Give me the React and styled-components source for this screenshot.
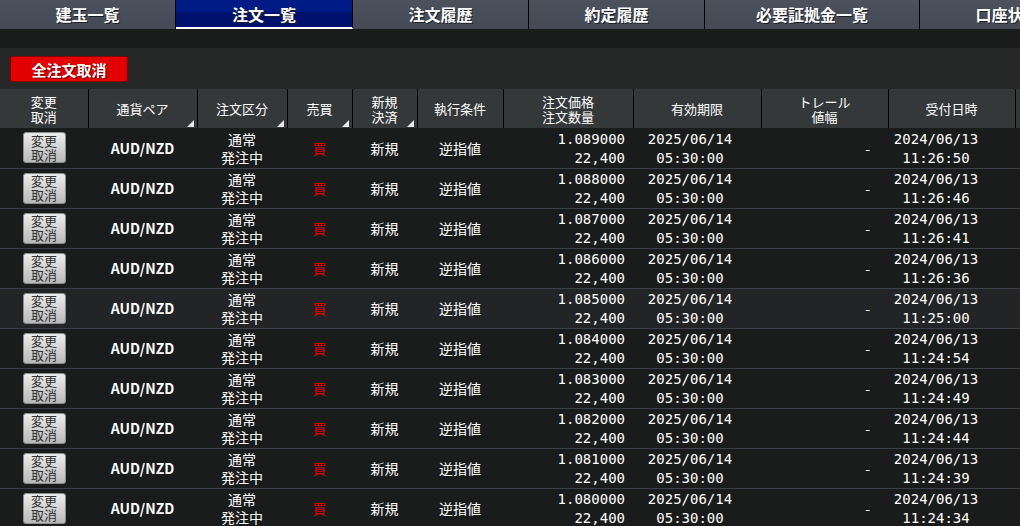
import React from "react";
import styled, { createGlobalStyle } from "styled-components";

const GlobalStyle = createGlobalStyle`
  html, body {
    margin: 0;
    padding: 0;
    background: #1a1b1b;
    overflow: hidden;
  }
  body {
    font-family: "Noto Sans CJK JP", "Noto Sans", sans-serif;
    color: #fff;
  }
`;

const Page = styled.div`
  width: 1020px;
  height: 526px;
  overflow: hidden;
  background: #1a1b1b;
`;

const TabBar = styled.div`
  display: flex;
  height: 29px;
  background: #444a55;
`;

const Tab = styled.div`
  flex: 0 0 ${(p) => p.w}px;
  box-sizing: border-box;
  display: flex;
  align-items: center;
  justify-content: center;
  border-right: 1px solid #000;
  font-size: 16px;
  font-weight: bold;
  color: #fff;
  text-shadow: 1px 1px 0 #1c1f26;
  background: ${(p) =>
    p.active
      ? "linear-gradient(#001b86 0, #001b86 46%, #00126e 46%, #00126e 100%)"
      : "linear-gradient(#4c515e, #434955)"};
  border-bottom: ${(p) => (p.active ? "2px solid #fff" : "none")};
  padding-bottom: ${(p) => (p.active ? "0" : "2px")};
`;

const Spacer = styled.div`
  height: 19px;
  background: #1a1b1b;
`;

const Toolbar = styled.div`
  height: 41px;
  background: #262828;
  display: flex;
  align-items: center;
  padding-left: 10px;
`;

const CancelAllButton = styled.button`
  width: 118px;
  height: 26px;
  margin-top: 1px;
  border: 1px solid #8a0000;
  border-radius: 2px;
  background: #e30000;
  color: #fff;
  font-family: "Noto Sans CJK JP", sans-serif;
  font-size: 15px;
  font-weight: bold;
  text-shadow: 1px 1px 0 #7a0000;
  padding: 0;
  cursor: pointer;
`;

const Table = styled.table`
  table-layout: fixed;
  border-collapse: collapse;
  border-spacing: 0;
  width: 1115px;
`;

const Th = styled.th`
  position: relative;
  height: 39px;
  padding: 0;
  box-sizing: border-box;
  background: #353839;
  border-right: 1px solid #000;
  font-size: 13px;
  font-weight: normal;
  line-height: 15px;
  color: #fff;
  text-align: center;
  vertical-align: middle;
`;

const SortMark = styled.span`
  position: absolute;
  right: 3px;
  bottom: 1px;
  width: 0;
  height: 0;
  border-style: solid;
  border-width: 0 0 7px 7px;
  border-color: transparent transparent #e8e8e8 transparent;
`;

const Tr = styled.tr`
  background: ${(p) => (p.hover ? "#232425" : "#1a1b1b")};
  border-bottom: 1px solid #3c404a;
`;

const Td = styled.td`
  height: 40px;
  padding: 0 ${(p) => p.pr || 0}px 0 0;
  box-sizing: border-box;
  text-align: ${(p) => p.align || "center"};
  vertical-align: middle;
  font-size: 14px;
  line-height: 18px;
  color: ${(p) => p.color || "#fff"};
  white-space: nowrap;
`;

const Mono = styled.span`
  font-family: "DejaVu Sans Mono", "Liberation Mono", monospace;
  font-size: 14px;
  line-height: 18px;
`;

const Pair = styled.span`
  font-weight: bold;
`;

const RowButton = styled.button`
  display: block;
  margin: 0 auto;
  width: 43px;
  height: 31px;
  padding: 0;
  border: 1px solid #8d8d8d;
  border-radius: 3px;
  background: linear-gradient(#ececec, #b9b9b9);
  color: #333;
  font-family: "Noto Sans CJK JP", sans-serif;
  font-size: 13px;
  line-height: 14px;
`;

const columns = [
  { w: 88, label: ["変更", "取消"] },
  { w: 109, label: ["通貨ペア"], sort: true },
  { w: 90, label: ["注文区分"], sort: true },
  { w: 65, label: ["売買"], sort: true },
  { w: 65, label: ["新規", "決済"], sort: true },
  { w: 86, label: ["執行条件"] },
  { w: 130, label: ["注文価格", "注文数量"] },
  { w: 128, label: ["有効期限"] },
  { w: 127, label: ["トレール", "値幅"] },
  { w: 127, label: ["受付日時"] },
  { w: 100, label: [""] },
];

const tabs = [
  { w: 176, label: "建玉一覧" },
  { w: 177, label: "注文一覧", active: true },
  { w: 176, label: "注文履歴" },
  { w: 176, label: "約定履歴" },
  { w: 215, label: "必要証拠金一覧" },
  { w: 176, label: "口座状況" },
];

const orders = [
  { price: "1.089000", time: "11:26:50" },
  { price: "1.088000", time: "11:26:46" },
  { price: "1.087000", time: "11:26:41" },
  { price: "1.086000", time: "11:26:36" },
  { price: "1.085000", time: "11:25:00", hover: true },
  { price: "1.084000", time: "11:24:54" },
  { price: "1.083000", time: "11:24:49" },
  { price: "1.082000", time: "11:24:44" },
  { price: "1.081000", time: "11:24:39" },
  { price: "1.080000", time: "11:24:34" },
];

function Lines({ lines }) {
  return lines.map((l, i) => (
    <React.Fragment key={i}>
      {i > 0 && <br />}
      {l}
    </React.Fragment>
  ));
}

export default function App() {
  return (
    <Page>
      <GlobalStyle />
      <TabBar>
        {tabs.map((t) => (
          <Tab key={t.label} w={t.w} active={t.active}>
            {t.label}
          </Tab>
        ))}
      </TabBar>
      <Spacer />
      <Toolbar>
        <CancelAllButton>全注文取消</CancelAllButton>
      </Toolbar>
      <Table>
        <colgroup>
          {columns.map((c, i) => (
            <col key={i} style={{ width: c.w }} />
          ))}
        </colgroup>
        <thead>
          <tr>
            {columns.map((c, i) => (
              <Th key={i}>
                <Lines lines={c.label} />
                {c.sort && <SortMark />}
              </Th>
            ))}
          </tr>
        </thead>
        <tbody>
          {orders.map((o) => (
            <Tr key={o.time} hover={o.hover}>
              <Td>
                <RowButton>
                  変更
                  <br />
                  取消
                </RowButton>
              </Td>
              <Td>
                <Pair>AUD/NZD</Pair>
              </Td>
              <Td>
                通常
                <br />
                発注中
              </Td>
              <Td color="#e00000">買</Td>
              <Td>新規</Td>
              <Td>逆指値</Td>
              <Td align="right" pr={8}>
                <Mono>
                  {o.price}
                  <br />
                  22,400
                </Mono>
              </Td>
              <Td pr={14}>
                <Mono>
                  2025/06/14
                  <br />
                  05:30:00
                </Mono>
              </Td>
              <Td align="right" pr={18}>
                -
              </Td>
              <Td pr={31}>
                <Mono>
                  2024/06/13
                  <br />
                  {o.time}
                </Mono>
              </Td>
              <Td />
            </Tr>
          ))}
        </tbody>
      </Table>
    </Page>
  );
}
